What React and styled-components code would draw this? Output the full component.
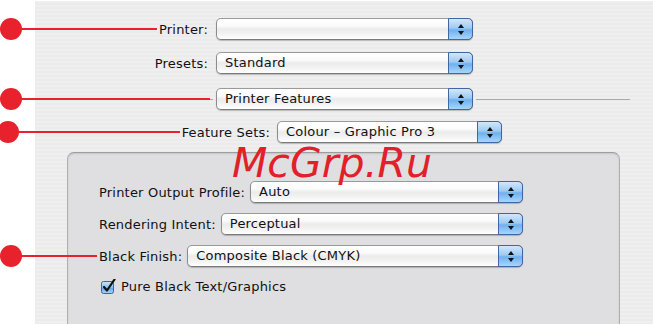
import React from "react";
import styled, { createGlobalStyle } from "styled-components";

const GlobalStyle = createGlobalStyle`
  html, body {
    margin: 0;
    padding: 0;
    background: #fff;
    overflow: hidden;
  }
  body {
    font-family: "DejaVu Sans", "Liberation Sans", sans-serif;
    font-size: 13px;
    letter-spacing: 0.2px;
    color: #111;
  }
`;

const Page = styled.div`
  position: relative;
  width: 653px;
  height: 324px;
  overflow: hidden;
  padding-top: 1px;
  box-sizing: border-box;
`;

const Sheet = styled.div`
  margin-left: 35px;
  height: 340px;
  padding-top: 17px;
  box-sizing: border-box;
  background: repeating-linear-gradient(
    to bottom,
    #efeff0 0px,
    #efeff0 2px,
    #ebebec 2px,
    #ebebec 4px
  );
`;

const Row = styled.div`
  display: flex;
  align-items: center;
  height: 22px;
  margin-top: ${(p) => p.$top || 0}px;
`;

const LabelBox = styled.div`
  width: ${(p) => p.$w}px;
  margin-right: ${(p) => p.$gap || 8}px;
  text-align: right;
  flex: none;
  white-space: nowrap;
`;

const Label = styled.span`
  position: relative;
  white-space: nowrap;
  flex: none;
`;

const Callout = styled.span`
  position: absolute;
  top: 50%;
  right: calc(100% + ${(p) => p.$space || 2}px);
  width: ${(p) => p.$reach}px;
  height: 22px;
  margin-top: -11px;
  display: flex;
  align-items: center;
  pointer-events: none;
  z-index: 2;
`;

const Dot = styled.span`
  width: 22px;
  height: 22px;
  border-radius: 50%;
  background: #e8222d;
  flex: none;
`;

const Wire = styled.span`
  flex: 1;
  height: 2px;
  background: #e8222d;
`;

const Popup = styled.div`
  position: relative;
  display: flex;
  flex: ${(p) => (p.$w ? "none" : "1")};
  width: ${(p) => (p.$w ? `${p.$w}px` : "auto")};
  height: 22px;
  box-sizing: border-box;
  border: 1px solid #8c8c8c;
  border-top-color: #9a9a9a;
  border-bottom-color: #7a7a7a;
  border-radius: 5px;
  background: linear-gradient(
    to bottom,
    #ffffff 0%,
    #fbfbfb 35%,
    #ebebeb 50%,
    #f3f3f3 75%,
    #ffffff 100%
  );
  box-shadow: 0 1px 1px rgba(0, 0, 0, 0.22);
`;

const PopupText = styled.span`
  flex: 1;
  padding-left: 8px;
  line-height: 20px;
  white-space: nowrap;
  overflow: hidden;
`;

const Stepper = styled.span`
  width: 23px;
  margin: -1px -1px -1px 0;
  border: 1px solid #3f67a6;
  border-radius: 0 5px 5px 0;
  background: linear-gradient(
    to bottom,
    #d3e7fa 0%,
    #9fcaf2 45%,
    #6fb0ee 55%,
    #a8d6fb 100%
  );
  display: flex;
  align-items: center;
  justify-content: center;
  flex: none;
`;

const Divider = styled.span`
  height: 1px;
  background: #a9a9ad;
  flex: ${(p) => (p.$w ? "none" : "1")};
  width: ${(p) => (p.$w ? `${p.$w}px` : "auto")};
  margin: ${(p) => p.$m};
`;

const DividerRow = styled(Row)`
  padding: 0 23px 0 22px;
`;

const Panel = styled.div`
  margin: 9px 33px 0 32px;
  height: 200px;
  padding-top: 28px;
  box-sizing: border-box;
  border: 1px solid #b0b0b3;
  border-top-color: #9d9da0;
  border-radius: 7px;
  background: #dfdfe2;
  box-shadow: inset 0 1px 2px rgba(0, 0, 0, 0.12);
`;

const PanelRow = styled(Row)`
  padding: 0 96px 0 31px;
  gap: 5px;
`;

const CheckRow = styled.div`
  display: flex;
  align-items: center;
  gap: 5px;
  margin-top: 11px;
  padding-left: 33px;
  height: 16px;
`;

const Watermark = styled.div`
  position: absolute;
  left: 232px;
  top: 143px;
  font-family: "DejaVu Sans", sans-serif;
  font-style: italic;
  font-size: 41px;
  letter-spacing: 0;
  line-height: 1;
  color: #e2202a;
  pointer-events: none;
`;

const Arrows = () => (
  <svg width="8" height="13" viewBox="0 0 8 13">
    <path d="M4 1 L7 5 L1 5 Z" fill="#111" />
    <path d="M1 8 L7 8 L4 12 Z" fill="#111" />
  </svg>
);

const Check = () => (
  <svg width="15" height="15" viewBox="0 0 15 15">
    <defs>
      <linearGradient id="cbg" x1="0" y1="0" x2="0" y2="1">
        <stop offset="0" stopColor="#cfe5fa" />
        <stop offset="0.5" stopColor="#8cc0f0" />
        <stop offset="0.55" stopColor="#63a8ec" />
        <stop offset="1" stopColor="#a9d5fb" />
      </linearGradient>
    </defs>
    <rect x="0.5" y="2.5" width="12" height="12" rx="2" fill="url(#cbg)" stroke="#3e63a0" />
    <path d="M3 8 L6 11.5 L13.5 0.5" fill="none" stroke="#111" strokeWidth="2.2" strokeLinecap="round" strokeLinejoin="round" />
  </svg>
);

const Select = ({ value, w }) => (
  <Popup $w={w}>
    <PopupText>{value}</PopupText>
    <Stepper>
      <Arrows />
    </Stepper>
  </Popup>
);

const Pin = ({ reach, space }) => (
  <Callout $reach={reach} $space={space}>
    <Dot />
    <Wire />
  </Callout>
);

export default function App() {
  return (
    <>
      <GlobalStyle />
      <Page>
        <Sheet>
          <Row>
            <LabelBox $w={173}>
              <Label>
                <Pin reach={157} />
                Printer:
              </Label>
            </LabelBox>
            <Select value="" w={257} />
          </Row>

          <Row $top={12}>
            <LabelBox $w={173}>
              <Label>Presets:</Label>
            </LabelBox>
            <Select value="Standard" w={257} />
          </Row>

          <DividerRow $top={14}>
            <Divider $w={156} $m="0 3px 0 0" />
            <Label>
              <Pin reach={210} space={6} />
            </Label>
            <Select value="Printer Features" w={257} />
            <Divider $m="0 0 0 3px" />
          </DividerRow>

          <Row $top={11}>
            <LabelBox $w={235} $gap={7}>
              <Label>
                <Pin reach={183} />
                Feature Sets:
              </Label>
            </LabelBox>
            <Select value="Colour – Graphic Pro 3" w={225} />
          </Row>

          <Panel>
            <PanelRow>
              <Label>Printer Output Profile:</Label>
              <Select value="Auto" />
            </PanelRow>
            <PanelRow $top={10}>
              <Label>Rendering Intent:</Label>
              <Select value="Perceptual" />
            </PanelRow>
            <PanelRow $top={10}>
              <Label>
                <Pin reach={97} />
                Black Finish:
              </Label>
              <Select value="Composite Black (CMYK)" />
            </PanelRow>
            <CheckRow>
              <Check />
              <span>Pure Black Text/Graphics</span>
            </CheckRow>
          </Panel>
        </Sheet>
        <Watermark>McGrp.Ru</Watermark>
      </Page>
    </>
  );
}
